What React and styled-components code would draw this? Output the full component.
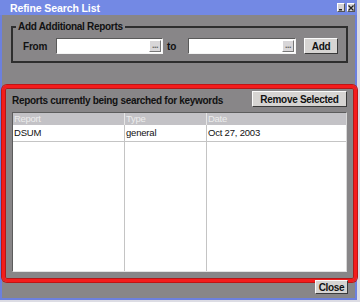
import React from "react";
import styled, { createGlobalStyle } from "styled-components";

const Global = createGlobalStyle`
  * { box-sizing: border-box; }
  body {
    margin: 0;
    background: #dcdce4;
    font-family: "Liberation Sans", Arial, sans-serif;
  }
`;

const rows = [{ report: "DSUM", type: "general", date: "Oct 27, 2003" }];

const App = () => {
  return (
    <>
      <Global />
      <Window>
        <TitleBar>
          <Title>Refine Search List</Title>
          <TitleButtons>
            <TitleButton>
              <svg width="6" height="6" viewBox="0 0 6 6">
                <rect x="1" y="4" width="3" height="1.5" fill="#222" />
              </svg>
            </TitleButton>
            <TitleButton>
              <svg width="6" height="6" viewBox="0 0 6 6">
                <path d="M0.5 0.5 L5.5 5.5 M5.5 0.5 L0.5 5.5" stroke="#222" strokeWidth="1.3" />
              </svg>
            </TitleButton>
          </TitleButtons>
        </TitleBar>
        <Body>
          <Fieldset>
            <Legend>Add Additional Reports</Legend>
            <FieldRow>
              <Label $w="33px">From</Label>
              <Picker $w="107px">
                <Dots>...</Dots>
              </Picker>
              <Label $m="0 12px 0 4px">to</Label>
              <Picker $w="108px">
                <Dots>...</Dots>
              </Picker>
              <Button $m="0 0 0 8px" $w="34px" $h="16px">Add</Button>
            </FieldRow>
          </Fieldset>
          <Highlight>
            <SectionHead>
              <SectionTitle>Reports currently being searched for keywords</SectionTitle>
              <Button $w="95px" $h="16px">Remove Selected</Button>
            </SectionHead>
            <Table>
              <HeadCell>Report</HeadCell>
              <HeadCell>Type</HeadCell>
              <HeadCell $last>Date</HeadCell>
              {rows.map((r) => (
                <React.Fragment key={r.report}>
                  <Cell>{r.report}</Cell>
                  <Cell>{r.type}</Cell>
                  <Cell $last>{r.date}</Cell>
                </React.Fragment>
              ))}
              <Filler />
              <Filler />
              <Filler $last />
            </Table>
          </Highlight>
          <Footer>
            <Button $w="33px" $h="14px">Close</Button>
          </Footer>
        </Body>
      </Window>
    </>
  );
};

const Window = styled.div`
  width: 357px;
  height: 300px;
  border: 2px solid #6c80de;
  border-top: none;
  background: #888688;
  display: flex;
  flex-direction: column;
`;

const TitleBar = styled.div`
  height: 15px;
  margin: 0 -2px;
  background: #7389e4;
  display: flex;
  align-items: center;
  justify-content: space-between;
  padding: 0 2px 0 10px;
`;

const Title = styled.span`
  color: #fff;
  font-weight: bold;
  font-size: 10.5px;
  letter-spacing: -0.1px;
`;

const TitleButtons = styled.div`
  display: flex;
  gap: 2px;
`;

const TitleButton = styled.div`
  width: 8px;
  height: 9px;
  background: #d4d2d6;
  border: 1px solid #fff;
  border-right-color: #555;
  border-bottom-color: #555;
  display: flex;
  align-items: center;
  justify-content: center;
`;

const Body = styled.div`
  flex: 1;
  display: flex;
  flex-direction: column;
  padding-top: 6px;
`;

const Fieldset = styled.fieldset`
  margin: 0 7px 0 9px;
  padding: 5px 3px 7px 3px;
  border: 2px solid #2e2e2e;
  min-width: 0;
`;

const Legend = styled.legend`
  font-size: 10px;
  line-height: 12px;
  font-weight: bold;
  letter-spacing: -0.3px;
  color: #111;
  padding: 0 2px;
`;

const FieldRow = styled.div`
  display: flex;
  align-items: center;
  padding-left: 7px;
`;

const Label = styled.span`
  font-size: 10px;
  font-weight: bold;
  letter-spacing: -0.2px;
  color: #111;
  width: ${(p) => p.$w || "auto"};
  margin: ${(p) => p.$m || "0"};
`;

const Picker = styled.div`
  display: flex;
  justify-content: flex-end;
  width: ${(p) => p.$w};
  height: 16px;
  background: #fff;
  border: 1px solid #5a5a5a;
  border-right-color: #f4f4f4;
  border-bottom-color: #f4f4f4;
  padding: 1px;
`;

const Dots = styled.div`
  width: 12px;
  background: #d8d6d8;
  font-size: 9px;
  font-weight: bold;
  letter-spacing: -0.5px;
  color: #666;
  text-align: center;
  line-height: 9px;
  border: 1px solid #fff;
  border-right-color: #777;
  border-bottom-color: #777;
`;

const Button = styled.div`
  width: ${(p) => p.$w};
  height: ${(p) => p.$h};
  margin: ${(p) => p.$m || "0"};
  font-size: 10px;
  font-weight: bold;
  letter-spacing: -0.3px;
  color: #111;
  background: #d6d4d2;
  border: 1px solid #fafafa;
  border-right-color: #3a3a3a;
  border-bottom-color: #3a3a3a;
  display: flex;
  align-items: center;
  justify-content: center;
  white-space: nowrap;
`;

const Highlight = styled.div`
  margin: 22px -2px 0 0;
  height: 197px;
  border: 3px solid #f41c1c;
  border-radius: 5px;
  box-shadow: 0 0 0 1px #c01414, inset 0 0 0 1px #b31818;
  padding: 3px 7px 7px 7px;
  display: flex;
  flex-direction: column;
  gap: 5px;
`;

const SectionHead = styled.div`
  display: flex;
  justify-content: space-between;
  align-items: flex-end;
`;

const SectionTitle = styled.span`
  font-size: 10px;
  font-weight: bold;
  letter-spacing: -0.3px;
  color: #111;
  white-space: nowrap;
  margin-bottom: 1px;
`;

const Table = styled.div`
  flex: 1;
  display: grid;
  grid-template-columns: 112px 82px 1fr;
  grid-template-rows: 12px 17px 1fr;
  background: #fff;
  border: 1px solid #5c5c5c;
  border-right-color: #d8d8d8;
  border-bottom-color: #e4e4e4;
`;

const HeadCell = styled.div`
  background: #c3c2c6;
  color: #ececec;
  font-size: 9.5px;
  letter-spacing: -0.3px;
  padding-left: 1px;
  line-height: 12px;
  border-right: ${(p) => (p.$last ? "none" : "1px solid #e6e6e6")};
`;

const Cell = styled.div`
  font-size: 9.5px;
  letter-spacing: -0.2px;
  color: #111;
  padding-left: 1px;
  line-height: 16px;
  border-bottom: 1px solid #c4c4c4;
  border-right: ${(p) => (p.$last ? "none" : "1px solid #c4c4c4")};
`;

const Filler = styled.div`
  border-right: ${(p) => (p.$last ? "none" : "1px solid #c4c4c4")};
`;

const Footer = styled.div`
  display: flex;
  justify-content: flex-end;
  margin-top: -2px;
  padding-right: 7px;
`;

export default App;
